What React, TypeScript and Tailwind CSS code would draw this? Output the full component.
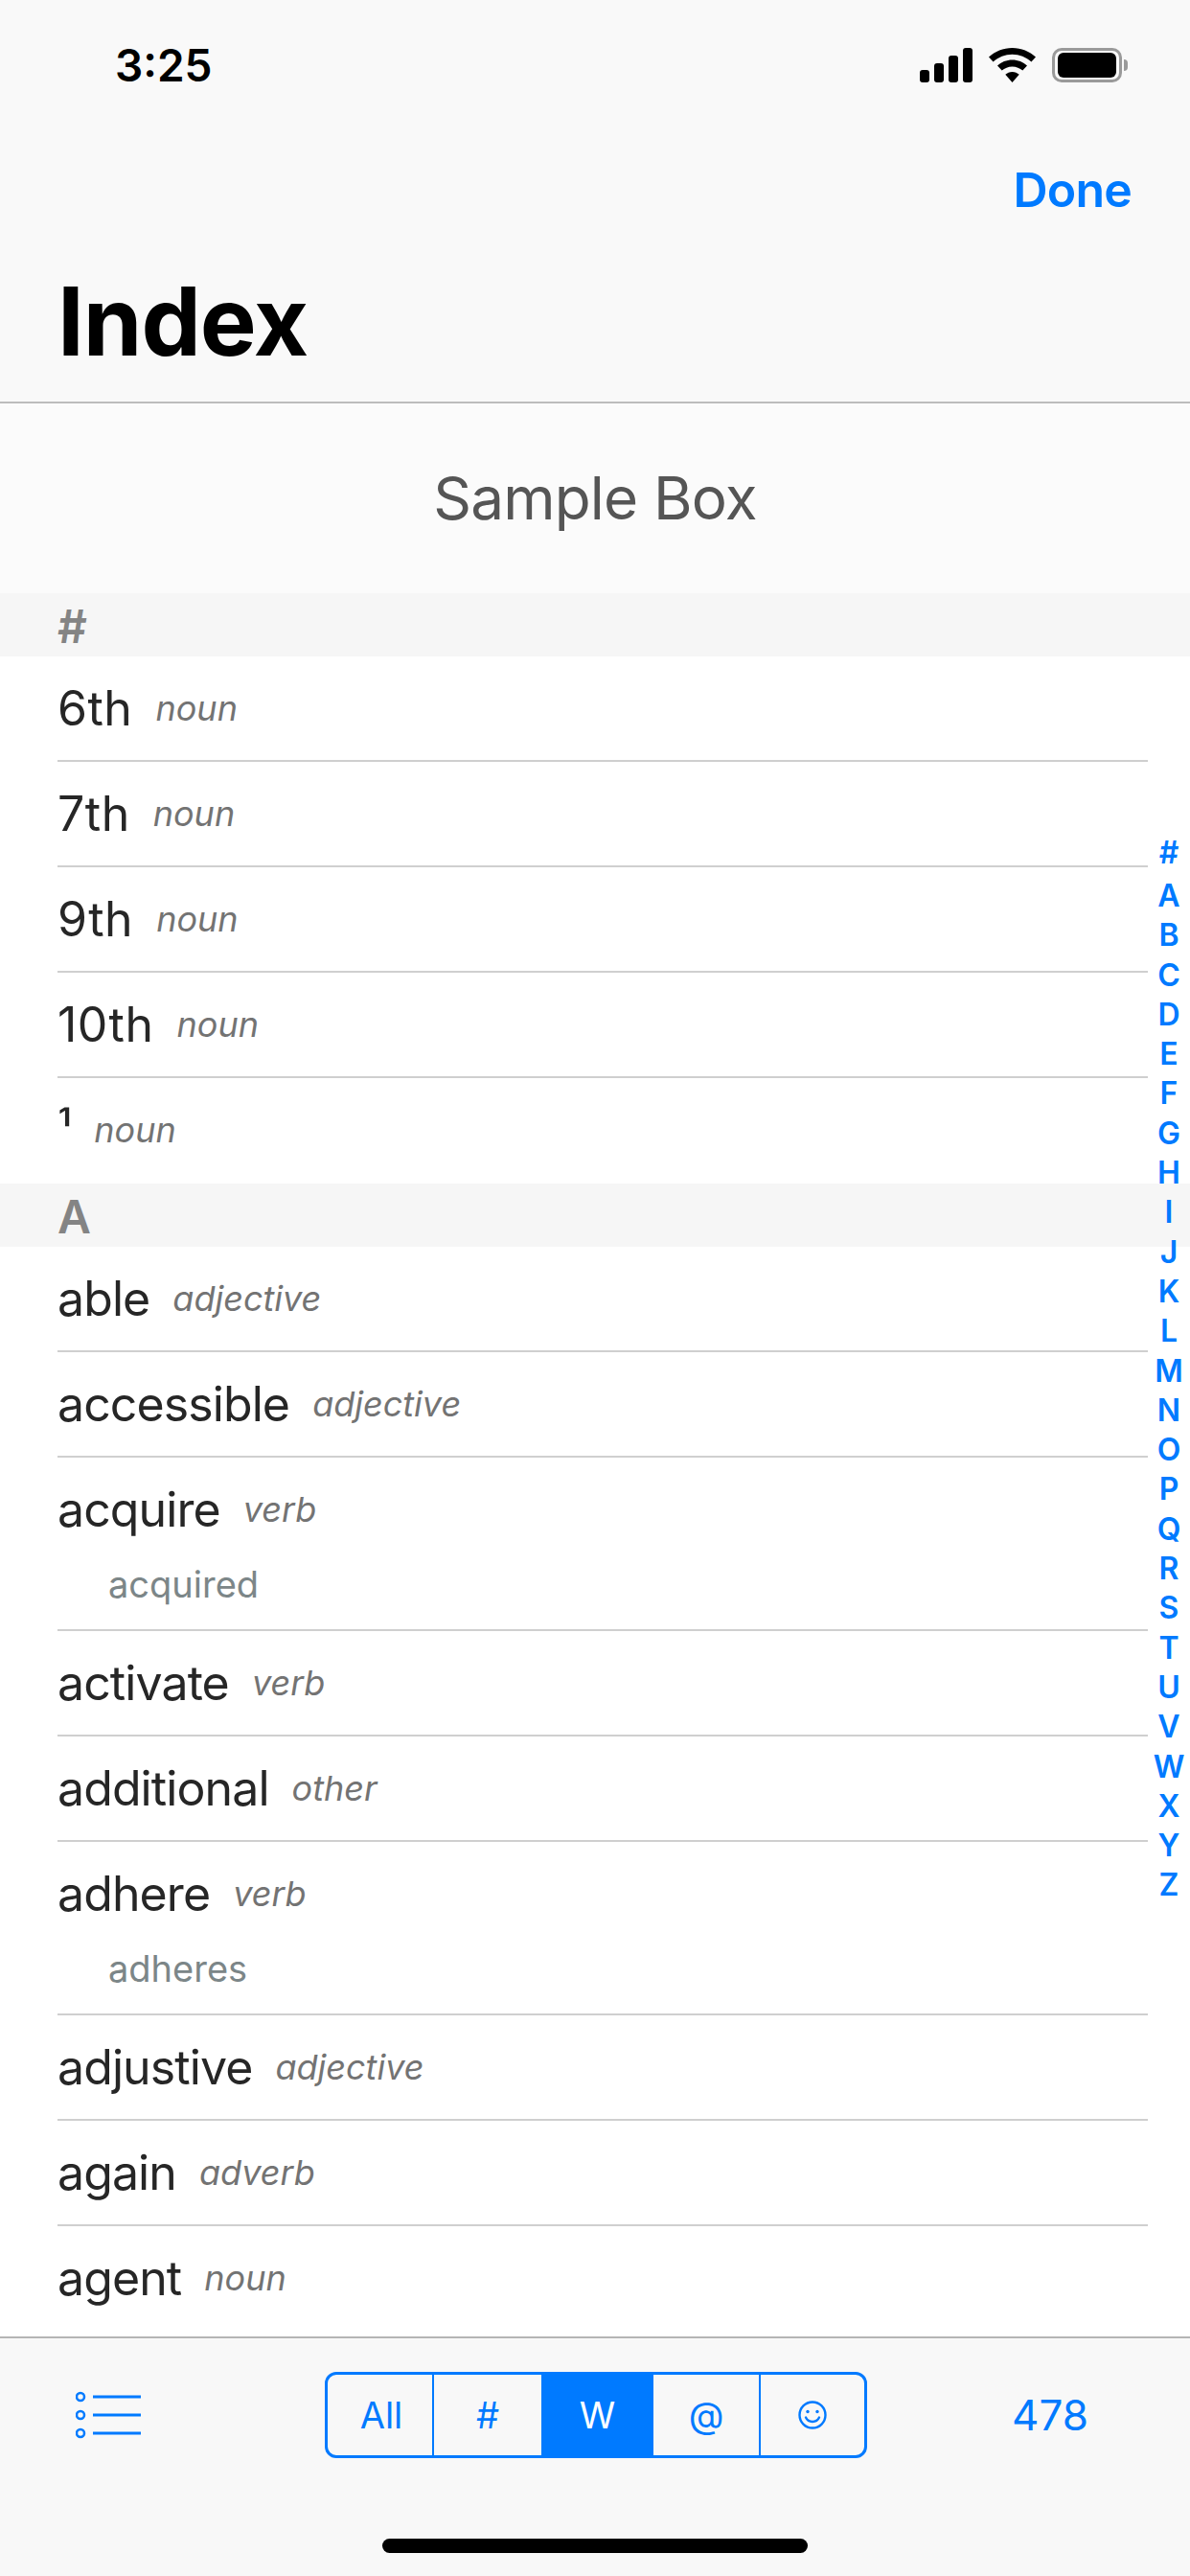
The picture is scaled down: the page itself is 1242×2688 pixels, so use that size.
import type { FC } from "react";

type Entry = { word: string; kind: string; form?: string };

const digits: Entry[] = [
  { word: "6th", kind: "noun" },
  { word: "7th", kind: "noun" },
  { word: "9th", kind: "noun" },
  { word: "10th", kind: "noun" },
  { word: "¹", kind: "noun" },
];

const letterA: Entry[] = [
  { word: "able", kind: "adjective" },
  { word: "accessible", kind: "adjective" },
  { word: "acquire", kind: "verb", form: "acquired" },
  { word: "activate", kind: "verb" },
  { word: "additional", kind: "other" },
  { word: "adhere", kind: "verb", form: "adheres" },
  { word: "adjustive", kind: "adjective" },
  { word: "again", kind: "adverb" },
  { word: "agent", kind: "noun" },
];

const alphabet = "ABCDEFGHIJKLMNOPQRSTUVWXYZ".split("");

const StatusIcons: FC = () => (
  <div className="flex items-center">
    <svg width="55" height="36" viewBox="0 0 55 36" className="mr-[17px]">
      <rect x="0" y="23" width="10" height="13" rx="3" />
      <rect x="15" y="16" width="10" height="20" rx="3" />
      <rect x="30" y="8" width="10" height="28" rx="3" />
      <rect x="45" y="0" width="10" height="36" rx="3" />
    </svg>
    <svg width="49" height="36" viewBox="0 0 49 36" className="mr-[17px]">
      <path d="M24.5 0C15 0 6.5 3.6 0 9.6l4.6 5C10 9.7 17 6.8 24.5 6.8S39 9.7 44.4 14.600l4.600-5C42.500 3.600 34 0 24.500 0Z" />
      <path d="M24.500 12.500c-6 0-11.400 2.300-15.500 6.100l4.700 5c2.800-2.600 6.600-4.200 10.800-4.200s8 1.600 10.800 4.200l4.700-5c-4.100-3.800-9.500-6.100-15.500-6.100Z" />
      <path d="M24.500 25c-2.800 0-5.300 1.100-7.200 2.800l7.200 8.200 7.200-8.200C29.800 26.100 27.300 25 24.500 25Z" />
    </svg>
    <div className="flex items-center">
      <div className="flex h-[36px] w-[73px] items-center justify-center rounded-[10px] border-[3px] border-[#9a9a9a]">
        <div className="h-[26px] w-[61px] rounded-[6px] bg-black" />
      </div>
      <div className="ml-[2px] h-[12px] w-[4px] rounded-r-full bg-[#9a9a9a]" />
    </div>
  </div>
);

const Row: FC<{ entry: Entry }> = ({ entry }) => (
  <div className="ml-[60px] mr-[44px] flex flex-col justify-center border-b-2 border-[#cfcfcf] last:border-transparent">
    <div className="flex h-[108px] items-center gap-[24px]">
      <span
        className={
          /\d/.test(entry.word)
            ? "text-[50px] leading-none tracking-[0.5px] text-[#262626]"
            : "text-[50px] leading-none tracking-[-0.9px] text-[#262626]"
        }
      >
        {entry.word}
      </span>
      <span className="text-[36px] leading-none italic text-[#737373]">{entry.kind}</span>
    </div>
    {entry.form && (
      <div className="-mt-[10px] h-[81px] pt-[10px] pl-[53px] text-[38px] leading-[48px] text-[#7c8688]">
        {entry.form}
      </div>
    )}
  </div>
);

const Section: FC<{ label: string; entries: Entry[] }> = ({ label, entries }) => (
  <section>
    <div className="flex h-[66px] items-center bg-[#f6f6f6] pt-[3px] pl-[60px] text-[48px] leading-none font-semibold text-[#848484]">
      {label}
    </div>
    {entries.map((entry) => (
      <Row key={entry.word} entry={entry} />
    ))}
  </section>
);

const Smiley: FC = () => (
  <svg width="30" height="30" viewBox="0 0 30 30" fill="none" stroke="#007aff" strokeWidth="2.4">
    <circle cx="15" cy="15" r="13.500" />
    <circle cx="10" cy="11.500" r="1.700" fill="#007aff" stroke="none" />
    <circle cx="20" cy="11.500" r="1.700" fill="#007aff" stroke="none" />
    <path d="M8 17.500c1.500 3.200 4 4.500 7 4.500s5.500-1.300 7-4.500" strokeLinecap="round" />
  </svg>
);

const App: FC = () => {
  return (
    <div className="relative flex h-[2688px] w-[1242px] flex-col overflow-hidden bg-white font-['Inter',sans-serif]">
      <header className="h-[421px] shrink-0 border-b-2 border-[#bcbcbc] bg-[#f9f9f9]">
        <div className="flex items-center justify-between pt-[44px] pl-[120px] pr-[65px]">
          <span className="text-[46px] leading-[48px] font-semibold text-black">3:25</span>
          <StatusIcons />
        </div>
        <div className="flex justify-end pt-[76px] pr-[61px]">
          <button className="text-[50px] leading-[60px] font-semibold tracking-[-0.8px] text-[#007aff]">Done</button>
        </div>
        <h1 className="pt-[52px] pl-[60px] text-[99px] leading-[110px] font-bold tracking-[-1px] text-black">Index</h1>
      </header>

      <div className="flex h-[198px] shrink-0 items-center justify-center bg-[#fbfbfb] text-[62px] leading-none tracking-[-0.8px] text-[#555555]">
        Sample Box
      </div>

      <main className="min-h-0 flex-1 overflow-hidden">
        <Section label="#" entries={digits} />
        <Section label="A" entries={letterA} />
      </main>

      <div className="absolute top-[869px] right-0 flex w-[44px] flex-col items-center text-[32px] font-semibold text-[#007aff]">
        <span className="h-[45px] leading-[41px]">#</span>
        {alphabet.map((letter) => (
          <span key={letter} className="h-[41.300px] leading-[41px]">
            {letter}
          </span>
        ))}
      </div>

      <footer className="relative h-[250px] shrink-0 border-t-2 border-[#b5b5b5] bg-[#f8f8f8]">
        <div className="flex items-center pt-[35px]">
          <svg width="68" height="50" viewBox="0 0 68 50" fill="none" stroke="#007aff" className="ml-[79px]">
            <circle cx="5" cy="6" r="4" strokeWidth="2.500" />
            <circle cx="5" cy="25" r="4" strokeWidth="2.500" />
            <circle cx="5" cy="44" r="4" strokeWidth="2.500" />
            <path d="M18 6h50M18 25h50M18 44h50" strokeWidth="3" />
          </svg>
          <div className="ml-[192px] flex h-[90px] w-[566px] overflow-hidden rounded-[12px] border-[3px] border-[#007aff] text-[38px] text-[#007aff]">
            <div className="flex w-[111px] items-center justify-center border-r-2 border-[#007aff] pl-[3px]">All</div>
            <div className="flex w-[112px] items-center justify-center">#</div>
            <div className="flex w-[117px] items-center justify-center bg-[#007aff] text-white">W</div>
            <div className="flex w-[112px] items-center justify-center border-r-2 border-[#007aff]">@</div>
            <div className="flex flex-1 items-center justify-center">
              <Smiley />
            </div>
          </div>
          <span className="ml-[151px] text-[44px] leading-none text-[#007aff]">478</span>
        </div>
        <div className="absolute bottom-[24px] left-[399px] h-[15px] w-[444px] rounded-full bg-black" />
      </footer>
    </div>
  );
};

export default App;
